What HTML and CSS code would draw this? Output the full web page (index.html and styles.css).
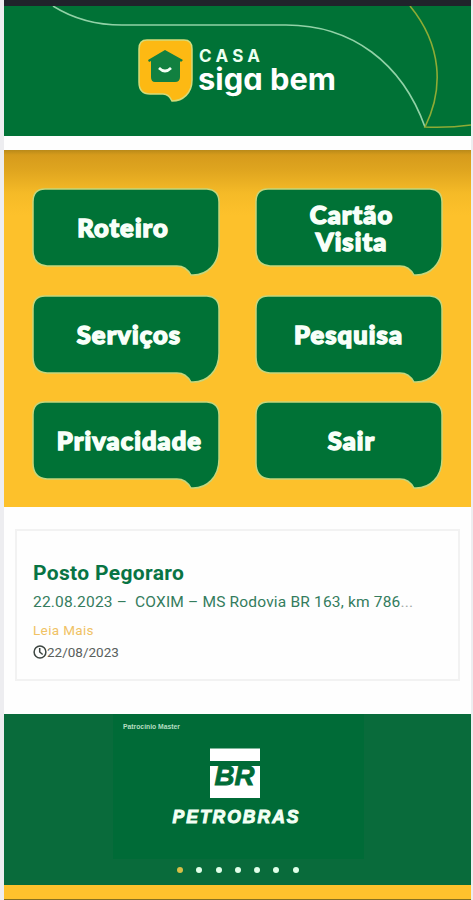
FILE: index.html
```html
<!DOCTYPE html>
<html lang="pt-br">
<head>
    <meta charset="UTF-8">
    <meta name="viewport" content="width=device-width, initial-scale=1.0">
    <title>Casa Siga Bem</title>
    <link rel="stylesheet" href="styles.css">
</head>
<body>
    <svg class="defs" width="0" height="0">
        <symbol id="bubble" viewBox="0 0 188 90">
            <path d="M13 1H175Q187 2 187 14V58C187 76 175 88 159 87Q154 78 145 78H15Q1 77 1 62V14Q1 1 13 1Z" fill="#007236" stroke="#c5d67c" stroke-width="1.5"/>
        </symbol>
    </svg>
    <div class="app">
        <div class="status-bar"></div>
        <header class="header">
            <svg width="467" height="130" viewBox="4 6 467 130">
                <g fill="none" stroke-width="1.6">
                    <path d="M53 6Q83 25 122 25H286C352 25 402 63 425 127" stroke="#91d2a7"/>
                    <path d="M410 6C442 45 444 89 425 127Q449 128 471 125" stroke="#8eab35"/>
                </g>
                <path d="M147 40H184Q192 40 192 49V80C192 93 183 101 172 101Q169 94 163 94H150Q139 94 139 82V49Q139 40 147 40Z" fill="#fdb913" stroke="#d4db79" stroke-width="1.5"/>
                <path d="M165 50L183 60L181 62L180 61V77Q180 82 175 82H155Q151 82 151 77V61L149 62L148 60Z" fill="#118040"/>
                <path d="M159 68Q165 74 171 68" fill="none" stroke="#f5fff5" stroke-width="2.6"/>
                <text class="logo-casa" x="199" y="61.5" textLength="61">CASA</text>
                <text class="logo-name" x="198" y="89.5" textLength="138" lengthAdjust="spacingAndGlyphs">siga bem</text>
            </svg>
        </header>
        <nav class="menu">
            <a class="menu-item"><svg><use href="#bubble"/></svg><span class="roteiro">Roteiro</span></a>
            <a class="menu-item"><svg><use href="#bubble"/></svg><span class="cartao">Cartão<br>Visita</span></a>
            <a class="menu-item"><svg><use href="#bubble"/></svg><span class="servicos">Serviços</span></a>
            <a class="menu-item"><svg><use href="#bubble"/></svg><span>Pesquisa</span></a>
            <a class="menu-item"><svg><use href="#bubble"/></svg><span class="privacidade">Privacidade</span></a>
            <a class="menu-item"><svg><use href="#bubble"/></svg><span class="sair">Sair</span></a>
        </nav>
        <main class="news">
            <div class="card">
                <h2>Posto Pegoraro</h2>
                <p>22.08.2023 –&nbsp; COXIM – MS Rodovia BR 163, km 786<span class="dots-end">...</span></p>
                <a class="more">Leia Mais</a>
                <div class="date">
                    <svg width="14" height="14" viewBox="0 0 14 14" fill="none" stroke="#3c4540" stroke-width="1.5">
                        <circle cx="7" cy="7" r="5.9"/>
                        <path d="M6.7 3V7L9.7 9.5"/>
                    </svg>
                    <span>22/08/2023</span>
                </div>
            </div>
        </main>
        <footer class="sponsor">
            <div class="slide">
                <svg width="251" height="145" viewBox="113 714 251 145">
                    <text class="sponsor-label" x="123" y="729" textLength="57" lengthAdjust="spacingAndGlyphs">Patrocínio Master</text>
                    <path d="M210 748.5H260V761H210ZM210 766H260V798H210Z" fill="#fff"/>
                    <text class="br" x="214.5" y="784.5" textLength="40" lengthAdjust="spacingAndGlyphs">BR</text>
                    <text class="petrobras" x="172.5" y="822.5" textLength="126">PETROBRAS</text>
                </svg>
            </div>
            <div class="pager">
                <i class="active"></i><i></i><i></i><i></i><i></i><i></i><i></i>
            </div>
        </footer>
        <div class="bottom-bar"></div>
    </div>
</body>
</html>
```
FILE: styles.css
```css
* {
    box-sizing: border-box;
}

body {
    margin: 0;
    background-color: #ededf0;
    font-family: Roboto, sans-serif;
}

svg {
    display: block;
}

.defs {
    position: absolute;
}

.app {
    width: 467px;
    height: 900px;
    margin-left: 4px;
    background-color: #fefefe;
    overflow: hidden;
}

.status-bar {
    height: 6px;
    background-color: #20232b;
}

.header {
    height: 130px;
    background-color: #007236;
}

.logo-casa {
    font: 700 17px Inter, sans-serif;
    fill: #ecfff0;
}

.logo-name {
    font: 700 30px Inter, sans-serif;
    font-feature-settings: "cv11";
    fill: #ffffff;
}

.menu {
    height: 357px;
    margin-top: 14px;
    padding: 38px 28px 0;
    display: grid;
    grid-template-columns: 188px 188px;
    grid-auto-rows: 90px;
    gap: 16.5px 34.5px;
    align-content: start;
    background: linear-gradient(#b98a19 0, #d69b1c 5px, #dfa51f 20px, #f5ba27 43px, #fdc12b 65px);
}

.menu-item {
    display: grid;
    color: #f8fff9;
    font: 900 25.5px/27px Lato, sans-serif;
    letter-spacing: 1.1px;
    -webkit-text-stroke: 1.5px #f8fff9;
    text-align: center;
}

.menu-item svg,
.menu-item span {
    grid-area: 1 / 1;
}

.menu-item svg {
    width: 188px;
    height: 90px;
}

.menu-item span {
    align-self: center;
    padding-bottom: 11px;
    z-index: 1;
}

.menu-item .roteiro {
    padding-right: 6px;
}

.menu-item .cartao,
.menu-item .servicos,
.menu-item .sair {
    padding-left: 6px;
}

.menu-item .privacidade {
    padding-left: 7px;
}

.news {
    height: 207px;
    padding: 22px 11px 0;
}

.card {
    height: 152px;
    padding: 29px 16px 0;
    border: 2px solid #f2f2f2;
}

.card h2 {
    margin: 0;
    color: #087444;
    font-size: 21px;
    line-height: 27px;
    font-weight: 700;
    letter-spacing: 0.35px;
}

.card p {
    margin: 4px 0 0;
    color: #347c5d;
    font-size: 15.5px;
    line-height: 22px;
    letter-spacing: 0.18px;
    white-space: nowrap;
}

.dots-end {
    color: #a2aaa6;
}

.more {
    display: block;
    margin-top: 7px;
    color: #f0c264;
    font-size: 13.5px;
    line-height: 20px;
    letter-spacing: 0.35px;
}

.date {
    display: flex;
    align-items: center;
    height: 22px;
    margin-top: 1px;
    color: #59605c;
    font-size: 13.5px;
}

.sponsor {
    height: 171px;
    background-color: #096b3b;
}

.slide {
    width: 251px;
    height: 145px;
    margin-left: 109px;
    background-color: #006b37;
}

.sponsor-label {
    font: 700 7px "Liberation Sans", sans-serif;
    fill: #b5dfc3;
}

.br {
    font: italic 700 27px "Liberation Sans", sans-serif;
    fill: #006b37;
    stroke: #006b37;
    stroke-width: 0.8px;
}

.petrobras {
    font: italic 700 17.5px "Liberation Sans", sans-serif;
    fill: #f2fff4;
    stroke: #f2fff4;
    stroke-width: 1px;
}

.pager {
    display: flex;
    gap: 13.3px;
    padding: 8px 0 0 173px;
}

.pager i {
    width: 6px;
    height: 6px;
    border-radius: 50%;
    background-color: #e0ffe9;
}

.pager .active {
    background-color: #d6bf47;
}

.bottom-bar {
    height: 15px;
    background-color: #fec22d;
    border-bottom: 1px solid #846f21;
}
```
